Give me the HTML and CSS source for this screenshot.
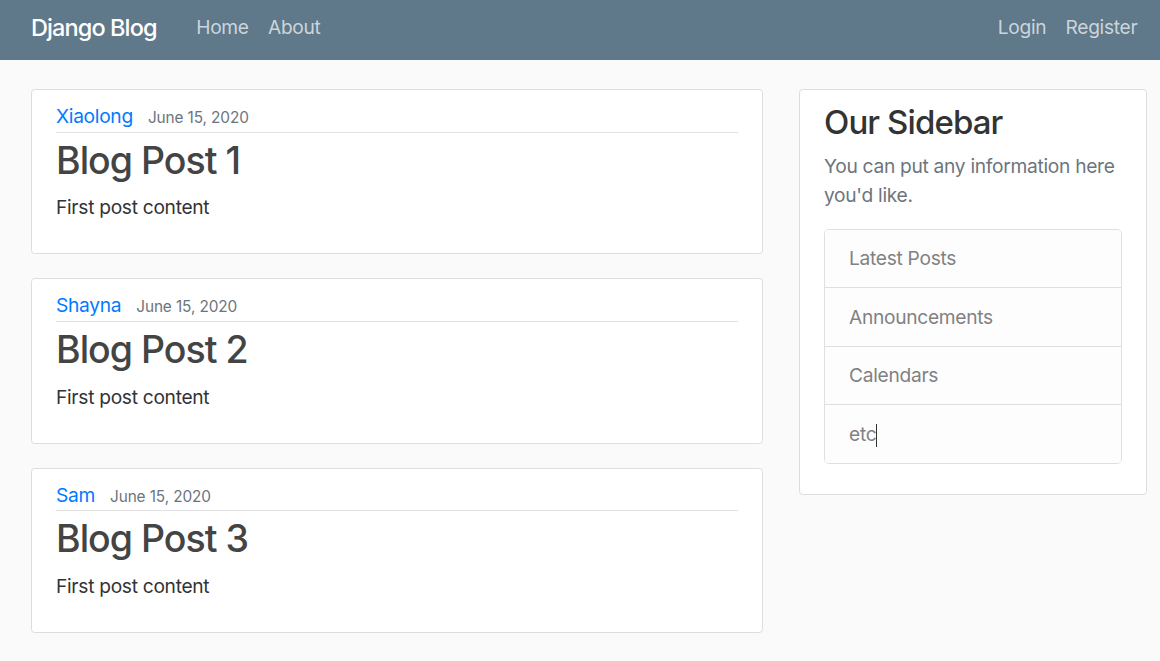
FILE: index.html
```html
<!DOCTYPE html>
<html lang="en">
<head>
<meta charset="utf-8">
<title>Django Blog</title>
<link rel="stylesheet" href="styles.css">
</head>
<body>
<header class="site-header">
  <nav class="navbar">
    <a class="brand" href="#">Django Blog</a>
    <div class="nav-left">
      <a class="nav-link" href="#">Home</a>
      <a class="nav-link" href="#">About</a>
    </div>
    <div class="nav-right">
      <a class="nav-link" href="#">Login</a>
      <a class="nav-link" href="#">Register</a>
    </div>
  </nav>
</header>
<main class="container">
  <div class="posts">
    <article class="content-section">
      <div class="article-metadata">
        <a class="author" href="#">Xiaolong</a><small class="date">June 15, 2020</small>
      </div>
      <h2 class="article-title">Blog Post 1</h2>
      <p class="article-content">First post content</p>
    </article>
    <article class="content-section">
      <div class="article-metadata">
        <a class="author" href="#">Shayna</a><small class="date">June 15, 2020</small>
      </div>
      <h2 class="article-title">Blog Post 2</h2>
      <p class="article-content">First post content</p>
    </article>
    <article class="content-section">
      <div class="article-metadata">
        <a class="author" href="#">Sam</a><small class="date">June 15, 2020</small>
      </div>
      <h2 class="article-title">Blog Post 3</h2>
      <p class="article-content">First post content</p>
    </article>
  </div>
  <aside class="sidebar">
    <div class="content-section sidebar-section">
      <h3 class="sidebar-title">Our Sidebar</h3>
      <p class="muted">You can put any information here you'd like.</p>
      <ul class="list-group">
        <li class="list-item">Latest Posts</li>
        <li class="list-item">Announcements</li>
        <li class="list-item">Calendars</li>
        <li class="list-item">etc<span class="caret"></span></li>
      </ul>
    </div>
  </aside>
</main>
</body>
</html>
```

FILE: styles.css
```css
* { box-sizing: border-box; }

html, body {
  margin: 0;
  padding: 0;
}

body {
  background: #fafafa;
  color: #333333;
  font-family: Inter, "Noto Sans", "Liberation Sans", sans-serif;
  font-size: 19.2px;
  line-height: 1.5;
  letter-spacing: -0.3px;
}

a { text-decoration: none; }

.site-header {
  background-color: #5f788a;
}

.navbar {
  height: 60px;
  display: flex;
  align-items: center;
  padding: 0 13px 5px 31px;
}

.brand {
  color: #fff;
  font-size: 23.5px;
  font-weight: 500;
  letter-spacing: -0.9px;
  margin-right: 30px;
}

.nav-left, .nav-right {
  display: flex;
  align-items: center;
}

.nav-right { margin-left: auto; }

.nav-link {
  color: #cbd5db;
  font-size: 19.2px;
  padding: 0 9.6px;
}

.container {
  display: flex;
  align-items: flex-start;
  gap: 36px;
  padding: 29px 13px 0 31px;
}

.posts {
  width: 732px;
  flex: none;
}

.sidebar {
  width: 348px;
  flex: none;
}

.content-section {
  background: #fff;
  padding: 12px 24px;
  border: 1px solid #dddddd;
  border-radius: 3.6px;
  margin-bottom: 24px;
}

.article-metadata {
  padding-bottom: 1px;
  margin-bottom: 4.8px;
  border-bottom: 1px solid #e3e3e3;
}

.author {
  color: #007bff;
  margin-right: 15px;
}

.date {
  color: #6c757d;
  font-size: 15.36px;
  letter-spacing: -0.1px;
}

.article-title {
  color: #444444;
  font-size: 37.5px;
  font-weight: 500;
  letter-spacing: -1px;
  line-height: 1.23;
  margin: 0 0 9.6px;
}

.article-content {
  margin: 0 0 19.2px;
}

.sidebar-section {
  padding-bottom: 30px;
}

.sidebar-title {
  font-size: 33px;
  font-weight: 500;
  letter-spacing: -0.9px;
  line-height: 1.22;
  margin: 0 0 9.6px;
  color: #333;
}

.muted {
  color: #6c757d;
  margin: 0 0 19.2px;
}

.list-group {
  list-style: none;
  margin: 0;
  padding: 0;
  border: 1px solid #dfdfdf;
  border-radius: 4.8px;
  overflow: hidden;
}

.list-item {
  background: #fdfdfe;
  color: #818182;
  padding: 14.4px 24px;
  border-top: 1px solid #dfdfdf;
}

.list-item:first-child { border-top: none; }

.caret {
  display: inline-block;
  width: 1px;
  height: 23px;
  background: #333;
  vertical-align: -6px;
}
```
